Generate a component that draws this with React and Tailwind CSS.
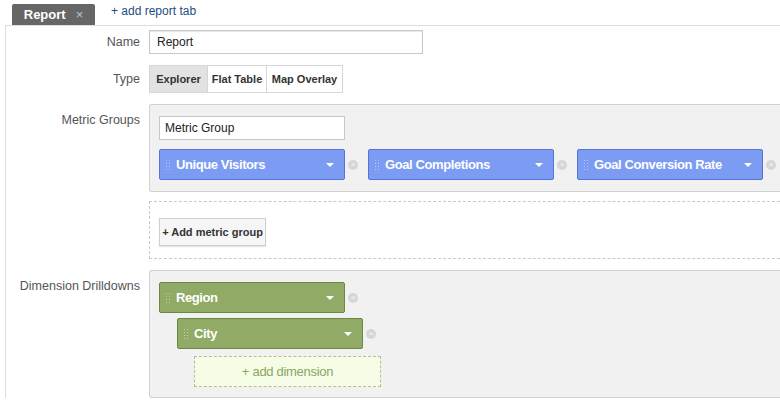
const METRICS = ['Unique Visitors', 'Goal Completions', 'Goal Conversion Rate'];

function Grip({ color }) {
  return (
    <span className="grid grid-cols-2 gap-x-[2px] gap-y-[2px] mr-[6px]">
      {[0, 1, 2, 3, 4, 5, 6, 7].map((i) => (
        <span key={i} className={`block h-[1px] w-[1px] ${color}`} />
      ))}
    </span>
  );
}

function RemoveDot() {
  return (
    <span className="flex h-[10px] w-[10px] shrink-0 items-center justify-center rounded-full bg-[#d6d6d6] text-[8px] leading-none text-[#f4f4f4]">
      ×
    </span>
  );
}

function Chip({ label, tone }) {
  const blue = tone === 'blue';
  return (
    <div
      className={`flex h-[31px] w-[186px] items-center rounded-[2px] border pl-[6px] pr-[10px] ${
        blue ? 'border-[#5674d8] bg-[#7c9bf2]' : 'border-[#6b8743] bg-[#91ab66]'
      }`}
    >
      <Grip color={blue ? 'bg-[#b8c9fb]' : 'bg-[#c5d6a6]'} />
      <span className="flex-1 text-[13px] font-bold tracking-[-0.4px] text-white">{label}</span>
      <span className="h-0 w-0 border-x-[4px] border-t-[4px] border-x-transparent border-t-white" />
    </div>
  );
}

function Label({ children }) {
  return (
    <div className="-ml-[5px] w-[148px] shrink-0 pr-[9px] text-right text-[12.5px] text-[#555]">{children}</div>
  );
}

export default function App() {
  return (
    <div className="h-[406px] w-[780px] overflow-hidden bg-white font-['Liberation_Sans',Arial,sans-serif]">
      <div className="flex h-[25px] items-end pl-[12px]">
        <div className="flex h-[21px] w-[83px] items-center justify-center gap-[10px] rounded-t-[2px] bg-[#666] text-[13px] font-bold text-white">
          <span>Report</span>
          <span className="text-[13px] font-normal text-[#c4c4c4]">×</span>
        </div>
        <div className="mb-[5px] ml-[16px] text-[12px] text-[#1d4e80]">+ add report tab</div>
      </div>
      <div className="ml-[5px] border-l border-t border-[#dedede] pt-[4px]">
        <div className="flex items-center pb-[11px]">
          <Label>Name</Label>
          <div className="flex h-[24px] w-[274px] items-center border border-[#c8c8c8] px-[7px] text-[12px] text-[#222] shadow-[inset_0_1px_1px_#e6e6e6]">
            Report
          </div>
        </div>
        <div className="flex items-center pb-[11px]">
          <Label>Type</Label>
          <div className="flex h-[28px] border border-[#d6d6d6] text-[11px] font-bold text-[#333]">
            <div className="flex w-[57px] items-center justify-center bg-[#e2e2e2]">Explorer</div>
            <div className="flex w-[59px] items-center justify-center border-l border-[#d6d6d6] bg-white">Flat Table</div>
            <div className="flex w-[76px] items-center justify-center border-l border-[#d6d6d6] bg-white">Map Overlay</div>
          </div>
        </div>
        <div className="flex items-start pb-[9px]">
          <div className="-ml-[5px] w-[148px] shrink-0 pr-[9px] pt-[7px] text-right text-[12.5px] text-[#555]">Metric Groups</div>
          <div className="h-[88px] flex-1 rounded-l-[3px] border border-r-0 border-[#d2d2d2] bg-[#f1f1f1] pl-[9px] pt-[11px]">
            <div className="flex h-[24px] w-[186px] items-center border border-[#c8c8c8] bg-white px-[5px] text-[12px] text-[#222]">
              Metric Group
            </div>
            <div className="mt-[9px] flex items-center">
              {METRICS.map((m) => (
                <div key={m} className="flex items-center">
                  <Chip label={m} tone="blue" />
                  <span className="ml-[3px] mr-[10px]">
                    <RemoveDot />
                  </span>
                </div>
              ))}
            </div>
          </div>
        </div>
        <div className="flex pb-[11px]">
          <div className="w-[143px] shrink-0" />
          <div className="h-[58px] flex-1 border border-r-0 border-dashed border-[#c9c9c9] pl-[9px] pt-[16px]">
            <div className="flex h-[28px] w-[107px] items-center justify-center border border-[#cfcfcf] bg-[#f6f6f6] text-[11px] font-bold text-[#333] shadow-[0_1px_1px_#e4e4e4]">
              + Add metric group
            </div>
          </div>
        </div>
        <div className="flex items-start">
          <div className="-ml-[5px] w-[148px] shrink-0 pr-[9px] pt-[7px] text-right text-[12.5px] text-[#555]">Dimension Drilldowns</div>
          <div className="h-[128px] flex-1 rounded-l-[3px] border border-r-0 border-[#d2d2d2] bg-[#f1f1f1] pl-[9px] pt-[11px]">
            <div className="flex items-center">
              <Chip label="Region" tone="green" />
              <span className="ml-[3px]">
                <RemoveDot />
              </span>
            </div>
            <div className="ml-[18px] mt-[5px] flex items-center">
              <Chip label="City" tone="green" />
              <span className="ml-[3px]">
                <RemoveDot />
              </span>
            </div>
            <div className="ml-[35px] mt-[7px] flex h-[31px] w-[187px] items-center justify-center border border-dashed border-[#b5c08e] bg-[#f5fde6] text-[13px] tracking-[-0.3px] text-[#8ba664]">
              + add dimension
            </div>
          </div>
        </div>
      </div>
    </div>
  );
}
